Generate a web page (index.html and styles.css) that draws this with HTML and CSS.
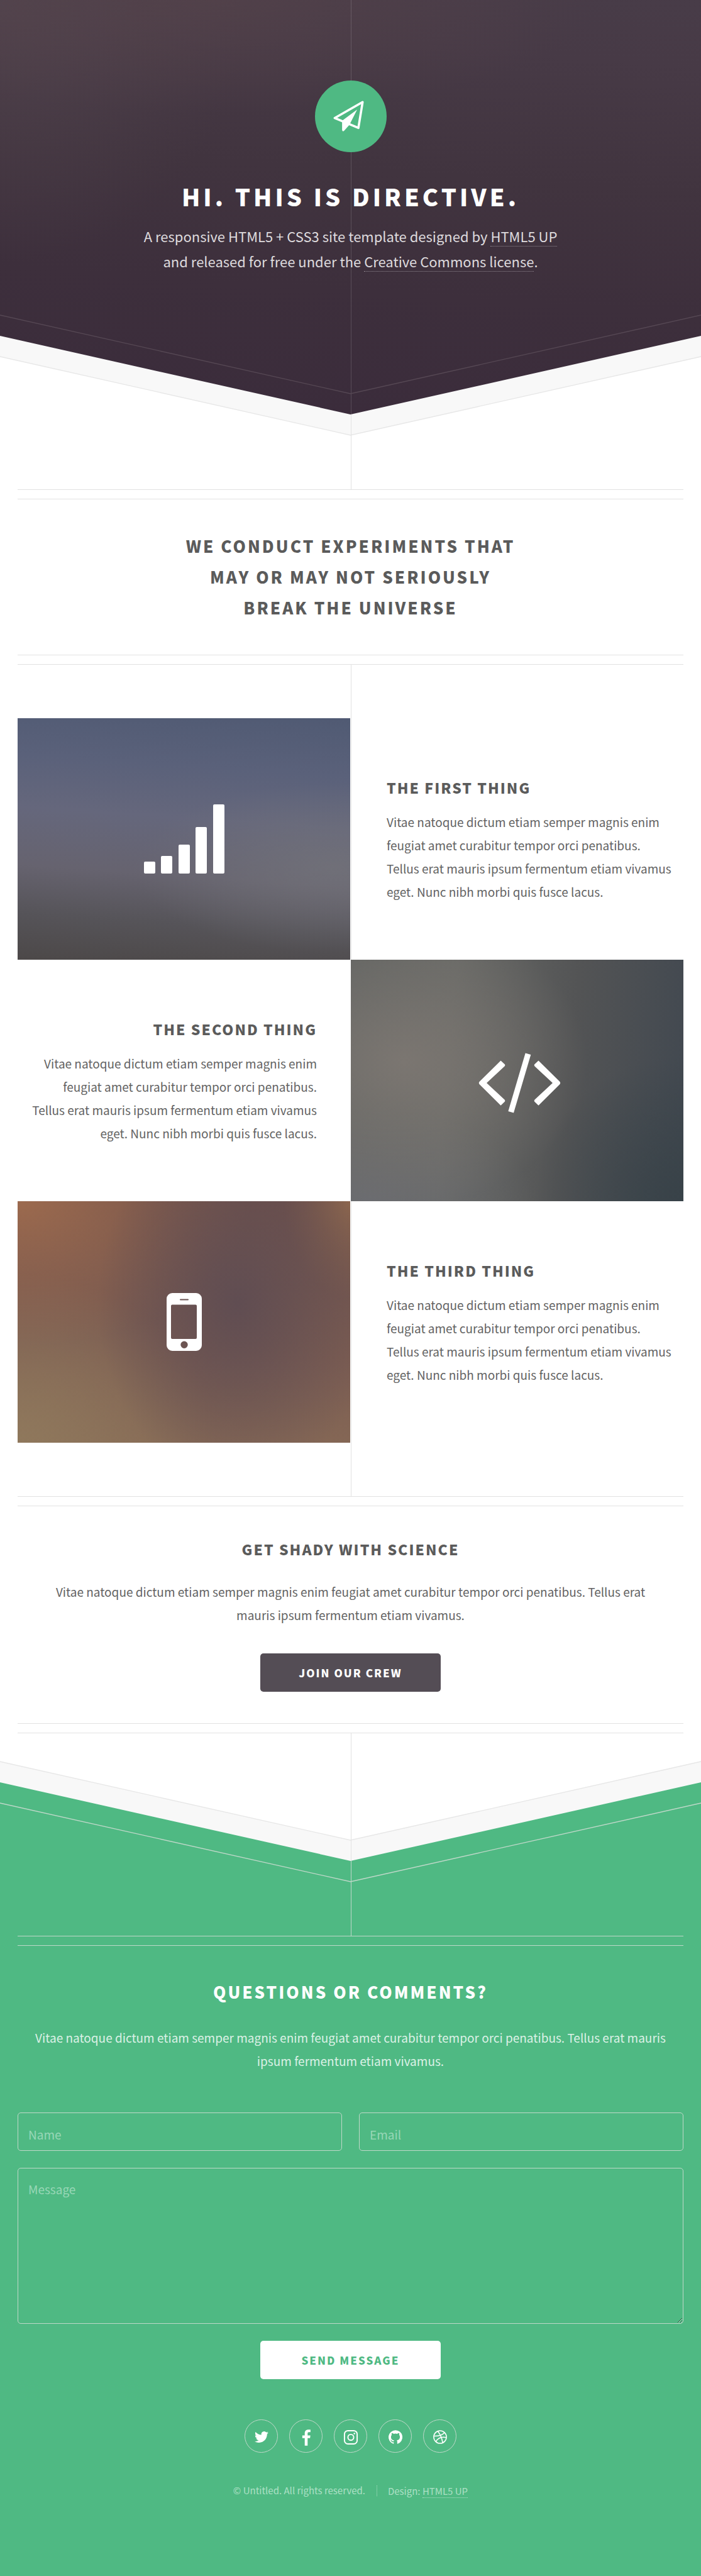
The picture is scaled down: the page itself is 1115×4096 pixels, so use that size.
FILE: index.html
```html
<!DOCTYPE html>
<html lang="en">
<head>
<meta charset="utf-8">
<title>Directive by HTML5 UP</title>
<meta name="viewport" content="width=device-width, initial-scale=1">
<link rel="stylesheet" href="styles.css">
</head>
<body>

<header class="hero">
  <div class="hero-inner">
    <span class="logo" aria-hidden="true">
      <svg viewBox="0 0 510 510">
        <path d="M339 153L140 267L309 337Z" fill="none" stroke="#fff" stroke-width="16" stroke-linejoin="round"/>
        <path d="M300 207L196 284L193 292V352Q194 361 201 361Q206 360 209 356L245 315Z" fill="#fff"/>
      </svg>
    </span>
    <h1>Hi. This is Directive.</h1>
    <p>A responsive HTML5 + CSS3 site template designed by <a href="#">HTML5 UP</a><br>
    and released for free under the <a href="#">Creative Commons license</a>.</p>
  </div>
  <svg class="chevron" viewBox="0 0 1115 193" preserveAspectRatio="none" aria-hidden="true">
    <path d="M0 34L557.5 159L1115 34V193H0Z" fill="#f8f8f8"/>
    <path d="M0 67L557.5 192L1115 67V193H0Z" fill="#fff"/>
    <path d="M0 67L557.5 192L1115 67" fill="none" stroke="#e7e7e7" stroke-width="1.4"/>
    <path d="M0 1L557.5 126L1115 1" fill="none" stroke="#564854" stroke-width="1.4"/>
    <path d="M558.5 159V193" stroke="#e2e2e2"/>
  </svg>
</header>

<main>
  <div class="spine"></div>
  <section class="panel intro">
    <h2>We conduct experiments that<br>may or may not seriously<br>break the universe</h2>
  </section>
  <div class="spine"></div>

  <section class="features">
    <article class="feature">
      <div class="picture sky" aria-hidden="true">
        <svg class="icon" width="128" height="110" viewBox="0 0 128 110" fill="#fff">
          <rect x="0" y="91" width="18" height="19" rx="2"/>
          <rect x="27" y="82" width="18" height="28" rx="2"/>
          <rect x="55" y="64" width="18" height="46" rx="2"/>
          <rect x="82" y="36" width="18" height="74" rx="2"/>
          <rect x="110" y="0" width="18" height="110" rx="2"/>
        </svg>
      </div>
      <div class="words">
        <h3>The First Thing</h3>
        <p>Vitae natoque dictum etiam semper magnis enim feugiat amet curabitur tempor orci penatibus. Tellus erat mauris ipsum fermentum etiam vivamus eget. Nunc nibh morbi quis fusce lacus.</p>
      </div>
    </article>
    <article class="feature flip">
      <div class="picture slate" aria-hidden="true">
        <svg class="icon code" width="131" height="98" viewBox="0 0 131 98" fill="#fff">
          <path d="M35.5 13.5L42 19.5Q42.800 21 41.500 22.500L13 49L41.500 75.500Q42.800 77 42 78.500L35.500 84.800L1.500 51Q0 49 1.500 47Z"/>
          <path d="M95.500 13.500L89 19.500Q88.200 21 89.500 22.500L118 49L89.500 75.500Q88.200 77 89 78.500L95.500 84.800L129.500 51Q131 49 129.500 47Z"/>
          <path d="M79 2.800L51.700 95.200" stroke="#fff" stroke-width="9" />
        </svg>
      </div>
      <div class="words">
        <h3>The Second Thing</h3>
        <p>Vitae natoque dictum etiam semper magnis enim feugiat amet curabitur tempor orci penatibus. Tellus erat mauris ipsum fermentum etiam vivamus eget. Nunc nibh morbi quis fusce lacus.</p>
      </div>
    </article>
    <article class="feature">
      <div class="picture ember" aria-hidden="true">
        <svg class="icon" width="56" height="92" viewBox="0 0 56 92" fill="#fff" fill-rule="evenodd">
          <path d="M9 0H47A9 9 0 0 1 56 9V83A9 9 0 0 1 47 92H9A9 9 0 0 1 0 83V9A9 9 0 0 1 9 0ZM22 9.400A1 1 0 0 0 22 11.400H34A1 1 0 0 0 34 9.400ZM9 18.500A2 2 0 0 0 7 20.500V71A2 2 0 0 0 9 73H46A2 2 0 0 0 48 71V20.500A2 2 0 0 0 46 18.500ZM28 76.500A5.700 5.700 0 1 0 28 87.900A5.700 5.700 0 1 0 28 76.500Z"/>
        </svg>
      </div>
      <div class="words">
        <h3>The Third Thing</h3>
        <p>Vitae natoque dictum etiam semper magnis enim feugiat amet curabitur tempor orci penatibus. Tellus erat mauris ipsum fermentum etiam vivamus eget. Nunc nibh morbi quis fusce lacus.</p>
      </div>
    </article>
  </section>

  <div class="spine"></div>
  <section class="panel action">
    <h3>Get shady with science</h3>
    <p>Vitae natoque dictum etiam semper magnis enim feugiat amet curabitur tempor orci penatibus. Tellus erat mauris ipsum fermentum etiam vivamus.</p>
    <button class="button" type="button">Join our crew</button>
  </section>
  <div class="spine short"></div>
</main>

<footer class="contact">
  <svg class="chevron" viewBox="0 0 1115 193" preserveAspectRatio="none" aria-hidden="true">
    <path d="M0 0H1115V34L557.5 159L0 34Z" fill="#f8f8f8"/>
    <path d="M0 0H1115L557.5 126L0 1Z" fill="#fff"/>
    <path d="M0 1L557.5 126L1115 1" fill="none" stroke="#e7e7e7" stroke-width="1.4"/>
    <path d="M0 67L557.5 192L1115 67" fill="none" stroke="#bfd8c9" stroke-width="1.4"/>
    <path d="M558.5 0V159" stroke="#e2e2e2"/>
    <path d="M558.5 159V193" stroke="#bfd8c9"/>
  </svg>
  <div class="spine"></div>
  <div class="contact-inner">
    <h2>Questions or comments?</h2>
    <p>Vitae natoque dictum etiam semper magnis enim feugiat amet curabitur tempor orci penatibus. Tellus erat mauris ipsum fermentum etiam vivamus.</p>
    <form class="form" action="#" method="post">
      <input type="text" name="name" placeholder="Name" aria-label="Name">
      <input type="email" name="email" placeholder="Email" aria-label="Email">
      <textarea name="message" placeholder="Message" aria-label="Message"></textarea>
      <button class="button light" type="submit">Send Message</button>
    </form>
    <ul class="social">
      <li><a href="#" aria-label="Twitter"><svg viewBox="0 0 24 24" fill="#fff"><path d="M23.950 4.570a10 10 0 0 1-2.820.770 4.960 4.960 0 0 0 2.160-2.720c-.95.550-2 .96-3.120 1.190a4.920 4.920 0 0 0-8.380 4.480C7.690 8.090 4.070 6.130 1.640 3.160a4.820 4.820 0 0 0-.67 2.480c0 1.710.87 3.210 2.190 4.100a4.900 4.900 0 0 1-2.230-.62v.06a4.920 4.920 0 0 0 3.950 4.830 5 5 0 0 1-2.210.080 4.940 4.940 0 0 0 4.600 3.420A9.870 9.870 0 0 1 0 19.540a13.990 13.990 0 0 0 7.550 2.210c9.050 0 14-7.500 14-13.980 0-.21 0-.42-.020-.63a9.940 9.940 0 0 0 2.460-2.550z"/></svg></a></li>
      <li><a href="#" aria-label="Facebook"><svg viewBox="0 0 24 24" fill="#fff"><path d="M19.500-.8V3.600H16.900C14.900 3.600 14.500 4.600 14.500 6V9.200H19.300L18.700 14H14.500V27H9.500V14H5.300V9.200H9.500V5.500C9.500 1.400 12 -.9 15.700 -.9C17.500 -.9 19 -.8 19.500 -.8Z"/></svg></a></li>
      <li><a href="#" aria-label="Instagram"><svg viewBox="0 0 24 24" fill="none" stroke="#fff" stroke-width="2.100"><rect x="1" y="1" width="22" height="23" rx="6"/><circle cx="12" cy="12.500" r="5"/><circle cx="18.200" cy="6" r="1.400" fill="#fff" stroke="none"/></svg></a></li>
      <li><a href="#" aria-label="GitHub"><svg viewBox="0 0 24 24" fill="#fff"><path d="M12 .3a12 12 0 0 0-3.800 23.400c.6.100.8-.3.800-.6v-2c-3.300.7-4-1.600-4-1.600-.600-1.400-1.400-1.800-1.400-1.800-1-.7.100-.7.100-.7 1.200 0 1.900 1.200 1.900 1.200 1 1.800 2.800 1.300 3.500 1 0-.8.400-1.300.7-1.600-2.700-.3-5.500-1.300-5.500-6 0-1.200.5-2.300 1.300-3.100-.2-.4-.6-1.600 0-3.200 0 0 1-.3 3.400 1.200a11.500 11.500 0 0 1 6 0c2.300-1.500 3.300-1.200 3.300-1.200.7 1.600.2 2.800.1 3.200.8.800 1.300 1.900 1.300 3.200 0 4.600-2.800 5.600-5.500 5.900.5.400.9 1 .9 2.200v3.300c0 .3.100.7.800.6A12 12 0 0 0 12 .3"/></svg></a></li>
      <li><a href="#" aria-label="Dribbble"><svg viewBox="0 0 24 24" fill="none" stroke="#fff" stroke-width="1.700"><circle cx="12" cy="12" r="11"/><path d="M8 1.800C12.500 7.500 15.300 14 16.500 22M1.200 10.400C8.500 10.600 15 9.500 19.800 4.300M4.700 20C8.500 13.500 15 11.200 22.800 12.900"/></svg></a></li>
    </ul>
    <ul class="copyright">
      <li>© Untitled. All rights reserved.</li>
      <li>Design: <a href="#">HTML5 UP</a></li>
    </ul>
  </div>
</footer>

</body>
</html>
```
FILE: styles.css
```css
*,
*::before,
*::after {
  box-sizing: border-box;
}

body,
h1,
h2,
h3,
p,
ul {
  margin: 0;
  padding: 0;
}

body {
  background: #fff;
  color: #636363;
  font-family: "Noto Sans CJK SC", "Noto Sans", sans-serif;
  font-size: 19px;
  line-height: 37px;
}

h1,
h2,
h3 {
  color: #5b5b5b;
  font-weight: 900;
  text-transform: uppercase;
}

h2 {
  font-size: 26px;
  line-height: 49px;
  letter-spacing: 3px;
}

h3 {
  font-size: 23px;
  letter-spacing: 2px;
}

a {
  color: inherit;
  text-decoration: none;
  border-bottom: 1px dotted currentColor;
}

/* Hero */

.hero {
  background:
    linear-gradient(rgba(255, 255, 255, .14), rgba(255, 255, 255, .14)) calc(50% + 1px) 0 / 1px 100% no-repeat,
    radial-gradient(ellipse 55% 26% at 30% 0, rgba(90, 70, 76, .5), rgba(90, 70, 76, 0)),
    radial-gradient(ellipse 35% 60% at 0 0, rgba(88, 74, 82, .5), rgba(88, 74, 82, 0)),
    linear-gradient(184deg, #483c48 0, #473a46 14%, #41343f 40%, #3d2f3c 65%, #3a2b3b 100%);
  text-align: center;
}

.hero-inner {
  padding: 128px 28px 65px;
}

.logo {
  display: block;
  width: 114px;
  height: 114px;
  margin: 0 auto 42px;
  border-radius: 50%;
  background: #4fb983;
}

.logo svg {
  display: block;
}

.hero h1 {
  color: #fff;
  font-size: 38px;
  line-height: 56px;
  letter-spacing: 5px;
}

.hero p {
  margin-top: 15px;
  color: #dedbde;
  font-size: 22px;
  line-height: 40px;
}

.hero a {
  border-color: #8f868f;
}

.chevron {
  display: block;
  width: 100%;
  height: 193px;
}

/* Centre line that joins the sections */

.spine {
  height: 85px;
  background: linear-gradient(#e2e2e2, #e2e2e2) calc(50% + 1px) 0 / 1px 100% no-repeat;
}

.spine.short {
  height: 44px;
}

.contact .spine {
  background-image: linear-gradient(#bfd8c9, #bfd8c9);
}

/* Panels between double rules */

.panel {
  margin: 0 28px;
  text-align: center;
}

.panel::before,
.panel::after,
.contact-inner::before {
  content: "";
  display: block;
  height: 16px;
  border: solid #e2e2e2;
  border-width: 1px 0;
}

.intro h2 {
  padding: 49px 0 51px;
}

.action h3 {
  padding-top: 50px;
}

.action p {
  padding: 30px 53px 43px;
}

.button {
  display: block;
  width: 287px;
  height: 61px;
  margin: 0 auto;
  border: 0;
  border-radius: 5px;
  background: #544d55;
  color: #fff;
  font: 900 17px/37px "Noto Sans CJK SC", "Noto Sans", sans-serif;
  letter-spacing: 2px;
  text-transform: uppercase;
}

.action .button {
  margin-bottom: 50px;
}

/* Features */

.features {
  margin: 0 28px;
  background: linear-gradient(#e2e2e2, #e2e2e2) calc(50% + 1px) 0 / 1px 100% no-repeat;
}

.feature {
  display: grid;
  grid-template-columns: 1fr 1fr;
  column-gap: 1px;
  min-height: 384px;
}

.picture {
  display: flex;
  align-items: center;
  justify-content: center;
}

.sky {
  background:
    radial-gradient(ellipse 60% 35% at 95% 62%, rgba(116, 116, 122, .7), rgba(116, 116, 122, 0)),
    linear-gradient(184deg, #505a73 0, #5a617a 22%, #65677c 42%, #66636f 64%, #565459 82%, #4c4848 100%);
}

.slate {
  background:
    radial-gradient(ellipse 55% 60% at 16% 42%, #7b7671, rgba(123, 118, 113, 0)),
    radial-gradient(ellipse 50% 40% at 5% 100%, #6b6c70, rgba(107, 108, 112, 0)),
    radial-gradient(ellipse 45% 60% at 100% 100%, #384248, rgba(56, 66, 72, 0)),
    linear-gradient(95deg, #626462 0, #686966 30%, #535455 65%, #414850 100%);
}

.ember {
  background:
    radial-gradient(ellipse 42% 75% at 66% 42%, #604d52 0, rgba(96, 77, 82, 0)),
    radial-gradient(ellipse 70% 60% at 0 0, #9c6a4e, rgba(156, 106, 78, 0)),
    radial-gradient(ellipse 20% 40% at 100% 0, #8c664e, rgba(140, 102, 78, 0)),
    radial-gradient(ellipse 60% 70% at 0 100%, #8f785c, rgba(143, 120, 92, 0)),
    linear-gradient(185deg, #6c4f4b 0, #7c5d52 60%, #876a56 100%);
}

.code {
  margin: 8px 0 0 8px;
}

.words {
  display: flex;
  flex-direction: column;
  justify-content: center;
  padding: 1px 15px 0 57px;
}

.words p {
  margin-top: 17px;
}

.flip .words {
  order: -1;
  margin-right: -1px;
  padding: 1px 54px 0 18px;
  background: #fff;
  text-align: right;
}

/* Contact */

.contact {
  background: #4fb983;
  color: #dcf1e6;
}

.contact-inner {
  padding: 0 28px 123px;
  text-align: center;
}

.contact-inner::before {
  border-color: #bfd8c9;
}

.contact h2 {
  padding-top: 48px;
  color: #fff;
}

.contact p {
  padding: 30px 0 64px;
}

.form {
  display: grid;
  grid-template-columns: 1fr 1fr;
  gap: 27px;
}

.form input,
.form textarea {
  display: block;
  width: 100%;
  height: 61px;
  margin: 0;
  padding: 8px 16px 0;
  border: 1px solid #bfd8c9;
  border-radius: 5px;
  background: transparent;
  color: #fff;
  font: inherit;
}

.form textarea {
  grid-column: 1 / -1;
  height: 248px;
  padding-top: 14px;
  resize: vertical;
}

.form ::placeholder {
  color: #98d7b7;
  opacity: 1;
}

.button.light {
  grid-column: 1 / -1;
  background: #fff;
  color: #4fb983;
}

.social {
  display: flex;
  justify-content: center;
  gap: 18px;
  margin-top: 64px;
  list-style: none;
}

.social a {
  display: flex;
  align-items: center;
  justify-content: center;
  width: 53px;
  height: 53px;
  border: 1px solid #bfd8c9;
  border-radius: 50%;
}

.social svg {
  width: 22px;
  height: 22px;
  margin-top: 3px;
  overflow: visible;
}

.copyright {
  display: flex;
  justify-content: center;
  align-items: center;
  margin-top: 47px;
  color: #aee0c6;
  font-size: 15px;
  line-height: 26px;
  list-style: none;
}

.copyright li + li {
  margin-left: 18px;
  padding-left: 17px;
  border-left: 1px dotted #aee0c6;
  line-height: 17px;
}
```
